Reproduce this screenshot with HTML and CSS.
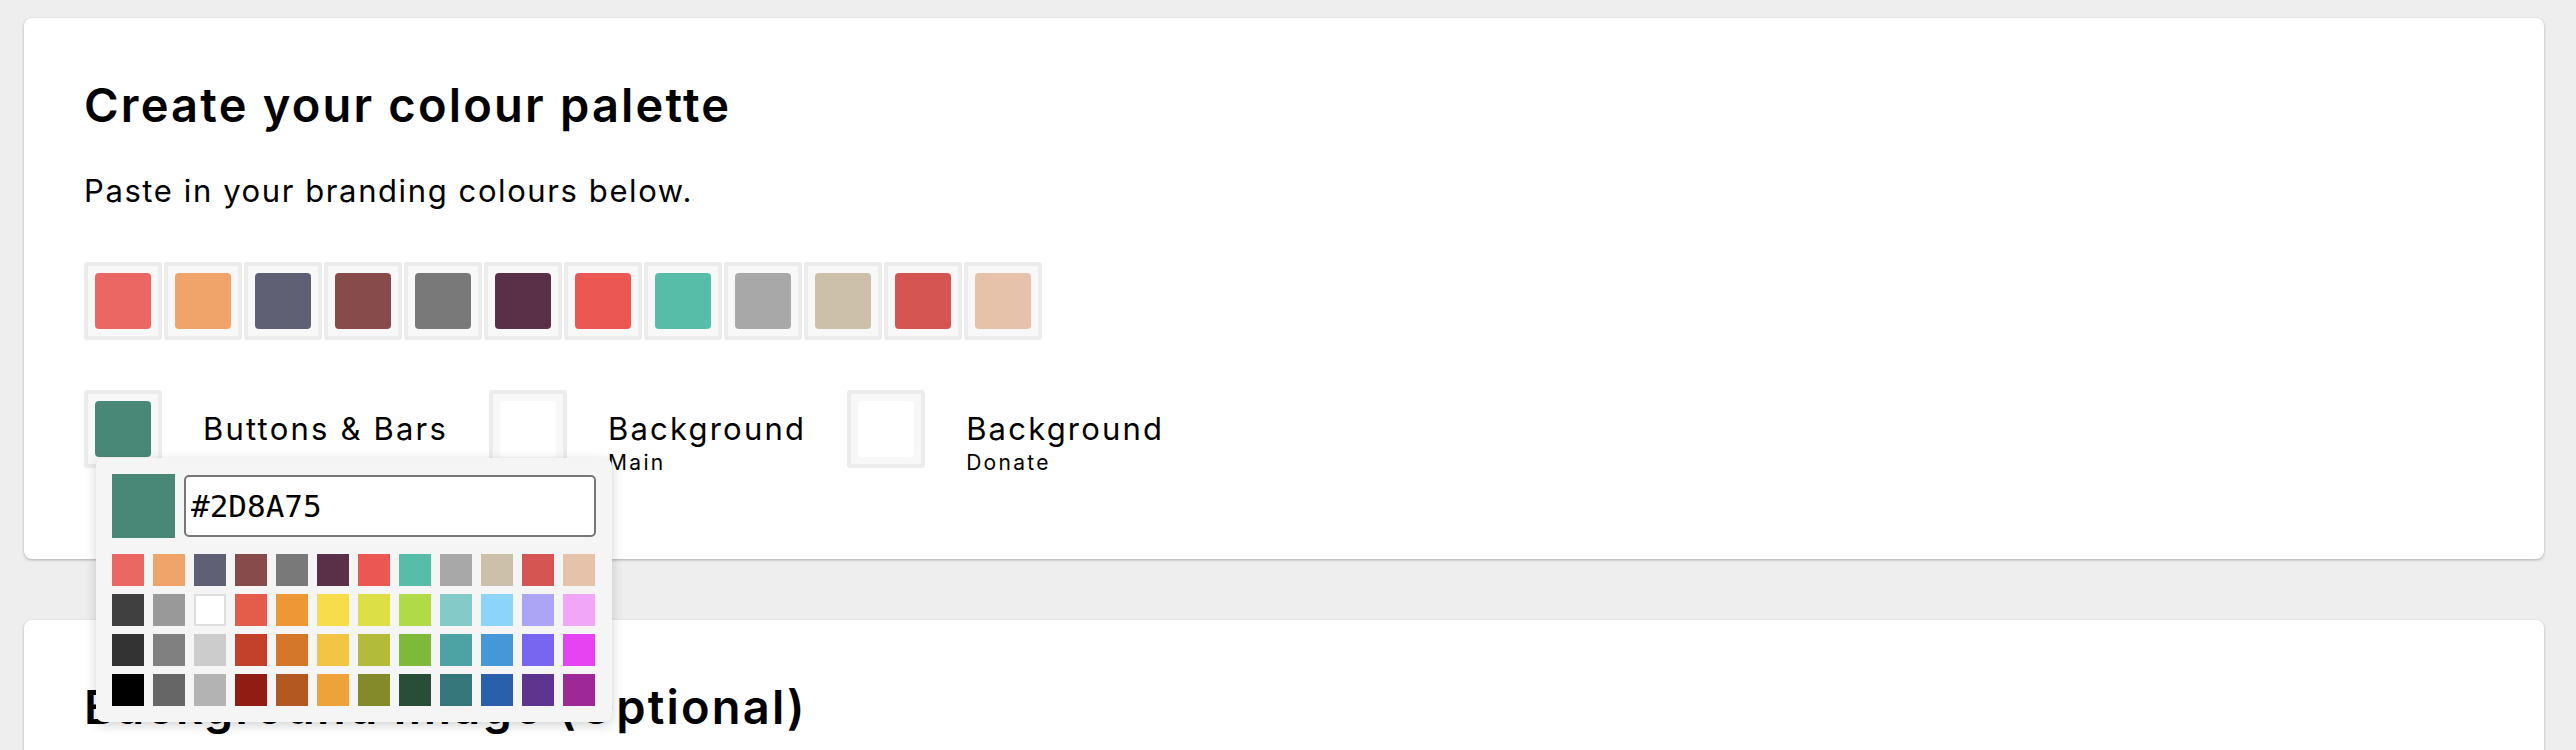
FILE: index.html
```html
<!DOCTYPE html>
<html lang="en">
<head>
<meta charset="utf-8">
<title>Create your colour palette</title>
<link rel="stylesheet" href="styles.css">
</head>
<body>
<main class="page">
  <section class="card card--palette">
    <h1 class="card-title">Create your colour palette</h1>
    <p class="card-lead">Paste in your branding colours below.</p>

    <div class="palette">
      <div class="swatch"><span class="swatch-fill" style="background:#EB6763"></span></div>
      <div class="swatch"><span class="swatch-fill" style="background:#F1A469"></span></div>
      <div class="swatch"><span class="swatch-fill" style="background:#606075"></span></div>
      <div class="swatch"><span class="swatch-fill" style="background:#874B4B"></span></div>
      <div class="swatch"><span class="swatch-fill" style="background:#797979"></span></div>
      <div class="swatch"><span class="swatch-fill" style="background:#5A3048"></span></div>
      <div class="swatch"><span class="swatch-fill" style="background:#EB5752"></span></div>
      <div class="swatch"><span class="swatch-fill" style="background:#57BDA8"></span></div>
      <div class="swatch"><span class="swatch-fill" style="background:#A8A8A8"></span></div>
      <div class="swatch"><span class="swatch-fill" style="background:#CDC0AA"></span></div>
      <div class="swatch"><span class="swatch-fill" style="background:#D55552"></span></div>
      <div class="swatch"><span class="swatch-fill" style="background:#E7C2AB"></span></div>
    </div>

    <div class="roles">
      <div class="role role--open">
        <div class="swatch"><span class="swatch-fill" style="background:#498877"></span></div>
        <div class="role-label">
          <div class="role-name">Buttons &amp; Bars</div>
        </div>

        <div class="picker">
          <div class="picker-head">
            <span class="picker-preview" style="background:#498877"></span>
            <input class="picker-input" type="text" value="#2D8A75">
          </div>
          <div class="picker-grid">
            <span class="chip" style="background:#EB6763"></span>
            <span class="chip" style="background:#F1A469"></span>
            <span class="chip" style="background:#606075"></span>
            <span class="chip" style="background:#874B4B"></span>
            <span class="chip" style="background:#797979"></span>
            <span class="chip" style="background:#5A3048"></span>
            <span class="chip" style="background:#EB5752"></span>
            <span class="chip" style="background:#57BDA8"></span>
            <span class="chip" style="background:#A8A8A8"></span>
            <span class="chip" style="background:#CDC0AA"></span>
            <span class="chip" style="background:#D55552"></span>
            <span class="chip" style="background:#E7C2AB"></span>

            <span class="chip" style="background:#404040"></span>
            <span class="chip" style="background:#999999"></span>
            <span class="chip chip--white" style="background:#FFFFFF"></span>
            <span class="chip" style="background:#E35D4A"></span>
            <span class="chip" style="background:#EE9737"></span>
            <span class="chip" style="background:#F7DD4C"></span>
            <span class="chip" style="background:#DCE046"></span>
            <span class="chip" style="background:#B1DB46"></span>
            <span class="chip" style="background:#84CAC8"></span>
            <span class="chip" style="background:#8DD4FA"></span>
            <span class="chip" style="background:#ACA4F4"></span>
            <span class="chip" style="background:#F2A6F7"></span>

            <span class="chip" style="background:#333333"></span>
            <span class="chip" style="background:#808080"></span>
            <span class="chip" style="background:#CCCCCC"></span>
            <span class="chip" style="background:#C3402A"></span>
            <span class="chip" style="background:#D4772A"></span>
            <span class="chip" style="background:#F3C545"></span>
            <span class="chip" style="background:#B2BC3A"></span>
            <span class="chip" style="background:#7EB939"></span>
            <span class="chip" style="background:#4DA2A4"></span>
            <span class="chip" style="background:#4598D8"></span>
            <span class="chip" style="background:#7966F0"></span>
            <span class="chip" style="background:#E643F3"></span>

            <span class="chip" style="background:#000000"></span>
            <span class="chip" style="background:#666666"></span>
            <span class="chip" style="background:#B3B3B3"></span>
            <span class="chip" style="background:#901C13"></span>
            <span class="chip" style="background:#B45822"></span>
            <span class="chip" style="background:#EEA23A"></span>
            <span class="chip" style="background:#838A29"></span>
            <span class="chip" style="background:#294E38"></span>
            <span class="chip" style="background:#36777C"></span>
            <span class="chip" style="background:#2A5FAB"></span>
            <span class="chip" style="background:#5E358E"></span>
            <span class="chip" style="background:#9E2898"></span>
          </div>
        </div>
      </div>

      <div class="role">
        <div class="swatch"><span class="swatch-fill" style="background:#FFFFFF"></span></div>
        <div class="role-label">
          <div class="role-name">Background</div>
          <div class="role-sub">Main</div>
        </div>
      </div>

      <div class="role">
        <div class="swatch"><span class="swatch-fill" style="background:#FFFFFF"></span></div>
        <div class="role-label">
          <div class="role-name">Background</div>
          <div class="role-sub">Donate</div>
        </div>
      </div>
    </div>
  </section>

  <section class="card card--image">
    <h1 class="card-title">Background Image (Optional)</h1>
  </section>
</main>
</body>
</html>
```

FILE: styles.css
```css
html {
  overflow: hidden;
}

body {
  margin: 0;
  background: #eeeeee;
  color: #000;
  font-family: Inter, "Open Sans", "Liberation Sans", sans-serif;
}

.page {
  display: flex;
  flex-direction: column;
  gap: 61px;
  padding: 18px 32px 0 24px;
}

.card {
  background: #fff;
  border-radius: 8px;
  box-shadow: 0 1px 3px rgba(0, 0, 0, 0.28);
  padding: 59px 60px 84px 60px;
}

.card--image {
  height: 400px;
}

.card-title {
  margin: 0;
  font-size: 47px;
  line-height: 56px;
  font-weight: 600;
  letter-spacing: 2.2px;
}

.card-lead {
  margin: 38px 0 0;
  font-size: 31px;
  line-height: 40px;
  font-weight: 400;
  letter-spacing: 1.6px;
}

.palette {
  display: flex;
  gap: 2px;
  margin-top: 51px;
}

.swatch {
  width: 78px;
  height: 78px;
  box-sizing: border-box;
  border: 4px solid #ececec;
  border-radius: 3px;
  background: #f8f8f8;
  padding: 7px;
  flex: none;
}

.swatch-fill {
  display: block;
  width: 100%;
  height: 100%;
  border-radius: 4px;
}

.roles {
  display: flex;
  margin-top: 50px;
  gap: 41px;
}

.role {
  display: flex;
  gap: 41px;
  position: relative;
}

.role-label {
  padding-top: 19px;
}

.role-name {
  font-size: 31px;
  line-height: 40px;
  letter-spacing: 2.2px;
}

.role-sub {
  font-size: 21px;
  line-height: 24px;
  margin-top: 2px;
  letter-spacing: 2.3px;
}

.picker {
  position: absolute;
  left: 12px;
  top: 68px;
  width: 516px;
  box-sizing: border-box;
  padding: 16px;
  background: #f5f5f5;
  border-radius: 8px;
  box-shadow: 0 3px 12px rgba(0, 0, 0, 0.18);
  z-index: 5;
}

.picker-head {
  display: flex;
  gap: 9px;
  align-items: center;
}

.picker-preview {
  width: 63px;
  height: 64px;
  flex: none;
}

.picker-input {
  flex: 1;
  min-width: 0;
  height: 62px;
  box-sizing: border-box;
  border: 2px solid #777;
  border-radius: 5px;
  background: #fff;
  padding: 0 5px;
  font-family: "DejaVu Sans Mono", "Liberation Mono", monospace;
  font-size: 31px;
  color: #000;
  outline: none;
}

.picker-grid {
  display: grid;
  grid-template-columns: repeat(12, 32px);
  grid-auto-rows: 32px;
  column-gap: 9px;
  row-gap: 8px;
  margin-top: 16px;
}

.chip {
  display: block;
}

.chip--white {
  box-sizing: border-box;
  border: 2px solid #dedede;
}
```
